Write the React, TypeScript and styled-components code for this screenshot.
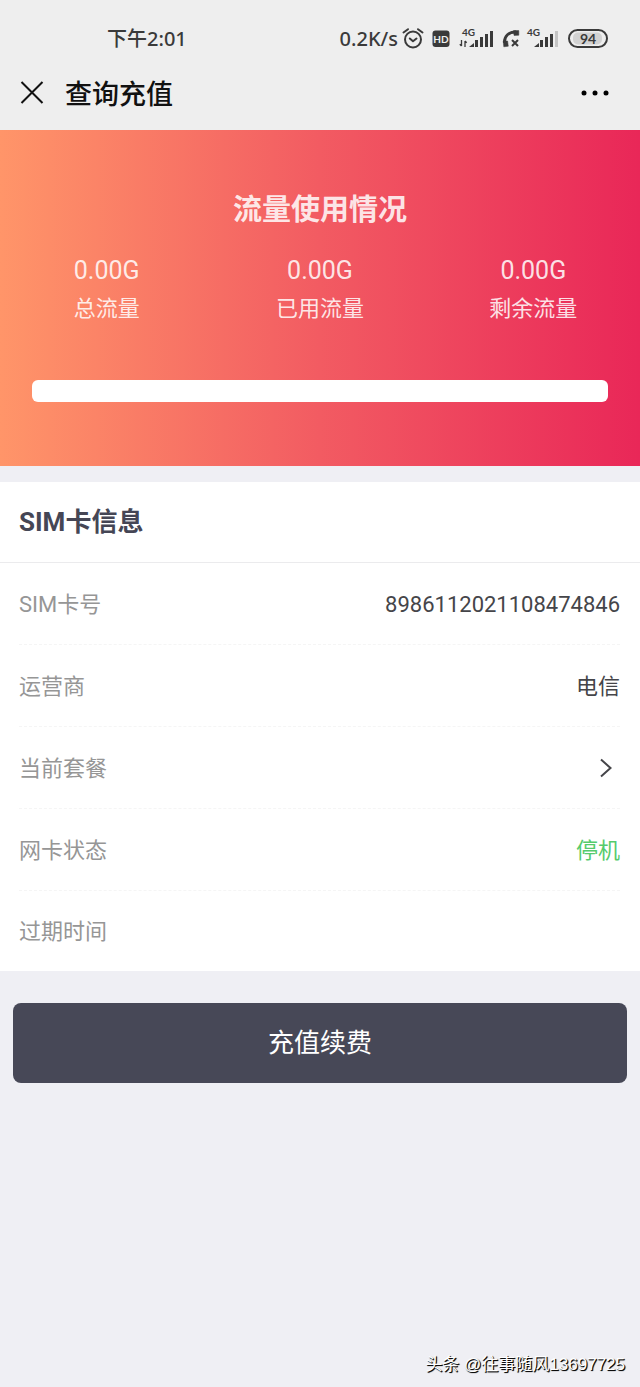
import React from "react";
import styled, { createGlobalStyle } from "styled-components";

const GlobalStyle = createGlobalStyle`
  *, *::before, *::after { box-sizing: border-box; }
  body {
    margin: 0;
    background: #efeff4;
    color: #454655;
    font-family: Roboto, "Noto Sans CJK SC", sans-serif;
  }
  h1, h2, p, dl, dt, dd { margin: 0; font-weight: inherit; }
  button { border: 0; padding: 0; background: none; font: inherit; color: inherit; cursor: pointer; }
  svg { display: block; }
`;

const Page = styled.div`
  min-height: 100vh;
  display: flex;
  flex-direction: column;
`;

const TopArea = styled.header`
  background: #eeeeee;
  color: #3a3a3a;
`;

const StatusBar = styled.div`
  display: flex;
  justify-content: space-between;
  align-items: center;
  height: 56px;
  padding: 22px 32px 0 107px;
  font: 500 20px/32px "Noto Sans", "Noto Sans CJK SC", sans-serif;
`;

const StatusIcons = styled.div`
  display: flex;
  align-items: center;
`;

const StatusGlyphs = styled.svg`
  margin-left: 4px;
  font-family: Lato, "Noto Sans", sans-serif;
`;

const NavBar = styled.div`
  display: flex;
  align-items: center;
  height: 74px;
  padding: 0 28px 0 20px;
  color: #111111;
`;

const IconButton = styled.button`
  display: flex;
`;

const NavTitle = styled.h1`
  flex: 1;
  margin-left: 20px;
  padding-top: 3px;
  font-size: 27px;
  line-height: 40px;
  font-weight: 500;
`;

const Usage = styled.section`
  padding: 60px 0 64px;
  background: linear-gradient(90deg, #ff9569 0%, #f25b62 50%, #e92758 100%);
  color: rgba(255, 255, 255, 0.86);
  text-align: center;
`;

const UsageTitle = styled.h2`
  font-size: 29px;
  line-height: 40px;
  font-weight: 700;
`;

const Stats = styled.dl`
  display: grid;
  grid-template-columns: repeat(3, 1fr);
  margin-top: 22px;
`;

const Stat = styled.div`
  display: flex;
  flex-direction: column-reverse;
`;

const StatLabel = styled.dt`
  font-size: 22px;
  line-height: 38px;
`;

const StatValue = styled.dd`
  font-size: 25px;
  line-height: 38px;
`;

const UsageTrack = styled.div`
  height: 22px;
  margin: 52px 32px 0;
  border-radius: 6px;
  background: #ffffff;
  overflow: hidden;
`;

const UsageFill = styled.div`
  height: 100%;
  background: #4cd964;
`;

const Card = styled.section`
  margin-top: 16px;
  background: #ffffff;
`;

const CardTitle = styled.h2`
  padding: 20px 19px;
  border-bottom: 1px solid #ebebed;
  font-size: 26px;
  line-height: 40px;
  font-weight: 700;
`;

const Rows = styled.dl`
  padding: 0 20px 0 19px;
`;

const Row = styled.div`
  display: flex;
  justify-content: space-between;
  align-items: center;
  height: 82px;
  padding-top: 2px;
  border-bottom: 1px dashed #f5f5f5;
  font-size: 22px;
  line-height: 32px;

  &:last-child { height: 80px; border-bottom: 0; }
`;

const RowLabel = styled.dt`
  color: #969696;
`;

const RowValue = styled.dd<{ $tone?: "normal" | "good" }>`
  color: ${({ $tone }) => ($tone === "good" ? "#55cb6c" : "#454549")};
`;

const RowButton = styled(IconButton)`
  padding: 0 7px 2px 0;
`;

const PayButton = styled.button`
  height: 80px;
  margin: 32px 13px 0;
  border-radius: 8px;
  background: #474857;
  color: #ffffff;
  font-size: 26px;
  line-height: 40px;
`;

const Credit = styled.p`
  margin-top: auto;
  padding: 0 15px 9px;
  text-align: right;
  color: #ffffff;
  font: 17px/26px "Liberation Sans", "Noto Sans CJK SC", sans-serif;
  text-shadow: 1px 1px 1px #000000, 1px 1px 0 #444444;
`;

const stats = [
  { label: "总流量", value: "0.00G" },
  { label: "已用流量", value: "0.00G" },
  { label: "剩余流量", value: "0.00G" },
];

const usedPercent = 0;

function StatusDrawing() {
  return (
    <StatusGlyphs width="206" height="28" viewBox="402 25 206 28" fill="none" stroke="#3a3a3a" aria-label="HD, 4G, 94%">
      <g strokeWidth="2" strokeLinecap="round">
        <circle cx="413" cy="39.500" r="8" />
        <path d="M403.500 32.500 L408 29.200 M422.500 32.500 L418 29.200" />
        <path d="M409.800 38.500 L413 41.300 L416.500 38.500" strokeLinejoin="round" />
      </g>
      <rect x="432.500" y="30.500" width="17" height="16.500" rx="3" fill="#3a3a3a" stroke="none" />
      <g stroke="none" fill="#3a3a3a">
        <text x="441" y="42.500" textAnchor="middle" fontSize="10" fontWeight="700" fill="#eeeeee">HD</text>
        <text x="462" y="36" fontSize="10" fontWeight="700">4G</text>
        <text x="527" y="36" fontSize="10" fontWeight="700">4G</text>
        <path d="M469 47 L474 43 V47 Z" />
        <rect x="475" y="40" width="3" height="7" />
        <rect x="480" y="37" width="3" height="10" />
        <rect x="485" y="34" width="3" height="13" />
        <rect x="490" y="31" width="3" height="16" />
        <path d="M534 47 L539 43 V47 Z" />
        <rect x="540" y="40" width="3" height="7" />
        <rect x="545" y="37" width="3" height="10" />
        <rect x="550" y="34" width="3" height="13" />
        <rect x="555" y="31" width="3" height="16" fill="#c4c4c4" />
      </g>
      <path d="M461.500 40 V46 M459.800 44.200 L461.500 46 M465 47 V41 M466.700 42.800 L465 41" strokeWidth="1.300" />
      <path d="M504.500 43 C504 36 509 31.800 516 32" strokeWidth="2.800" />
      <path
        d="M503.200 41 L507.600 41 L508.300 46.200 L503.800 46.800 Z M513.500 30.600 L518.800 30.600 L518.800 35.200 L514 35.400 Z"
        fill="#3a3a3a"
        strokeWidth="0.500"
        strokeLinejoin="round"
      />
      <path d="M512 40 L518 46 M518 40 L512 46" strokeWidth="2" />
      <rect x="569" y="30" width="38" height="17" rx="8.500" strokeWidth="2" />
      <rect x="573" y="32.500" width="29" height="12" rx="5" fill="#d2d2d2" stroke="none" />
      <text x="588" y="43.500" textAnchor="middle" fontSize="14" fontWeight="700" fill="#3a3a3a" stroke="none">94</text>
    </StatusGlyphs>
  );
}

export default function App() {
  return (
    <>
      <GlobalStyle />
      <Page>
        <TopArea>
          <StatusBar>
            <span>下午2:01</span>
            <StatusIcons>
              <span>0.2K/s</span>
              <StatusDrawing />
            </StatusIcons>
          </StatusBar>
          <NavBar>
            <IconButton type="button" aria-label="关闭">
              <svg width="25" height="26" viewBox="0 0 25 26" fill="none" stroke="#111111" strokeWidth="2">
                <path d="M1.500 2 L22.500 23 M22.500 2 L1.500 23" />
              </svg>
            </IconButton>
            <NavTitle>查询充值</NavTitle>
            <IconButton type="button" aria-label="更多">
              <svg width="32" height="20" viewBox="0 0 32 20" fill="#000000">
                <circle cx="4" cy="10" r="2.500" />
                <circle cx="15" cy="10" r="2.500" />
                <circle cx="26" cy="10" r="2.500" />
              </svg>
            </IconButton>
          </NavBar>
        </TopArea>

        <Usage>
          <UsageTitle>流量使用情况</UsageTitle>
          <Stats>
            {stats.map((s) => (
              <Stat key={s.label}>
                <StatLabel>{s.label}</StatLabel>
                <StatValue>{s.value}</StatValue>
              </Stat>
            ))}
          </Stats>
          <UsageTrack role="progressbar" aria-label="已用流量" aria-valuenow={usedPercent} aria-valuemin={0} aria-valuemax={100}>
            <UsageFill style={{ width: `${usedPercent}%` }} />
          </UsageTrack>
        </Usage>

        <Card>
          <CardTitle>SIM卡信息</CardTitle>
          <Rows>
            <Row>
              <RowLabel>SIM卡号</RowLabel>
              <RowValue>8986112021108474846</RowValue>
            </Row>
            <Row>
              <RowLabel>运营商</RowLabel>
              <RowValue>电信</RowValue>
            </Row>
            <Row>
              <RowLabel>当前套餐</RowLabel>
              <RowValue>
                <RowButton type="button" aria-label="查看当前套餐">
                  <svg width="14" height="20" viewBox="0 0 14 20" fill="none" stroke="#454549" strokeWidth="2">
                    <path d="M2 1.500 L11.500 10 L2 18.500" />
                  </svg>
                </RowButton>
              </RowValue>
            </Row>
            <Row>
              <RowLabel>网卡状态</RowLabel>
              <RowValue $tone="good">停机</RowValue>
            </Row>
            <Row>
              <RowLabel>过期时间</RowLabel>
              <RowValue />
            </Row>
          </Rows>
        </Card>

        <PayButton type="button">充值续费</PayButton>
        <Credit>头条 @往事随风13697725</Credit>
      </Page>
    </>
  );
}
